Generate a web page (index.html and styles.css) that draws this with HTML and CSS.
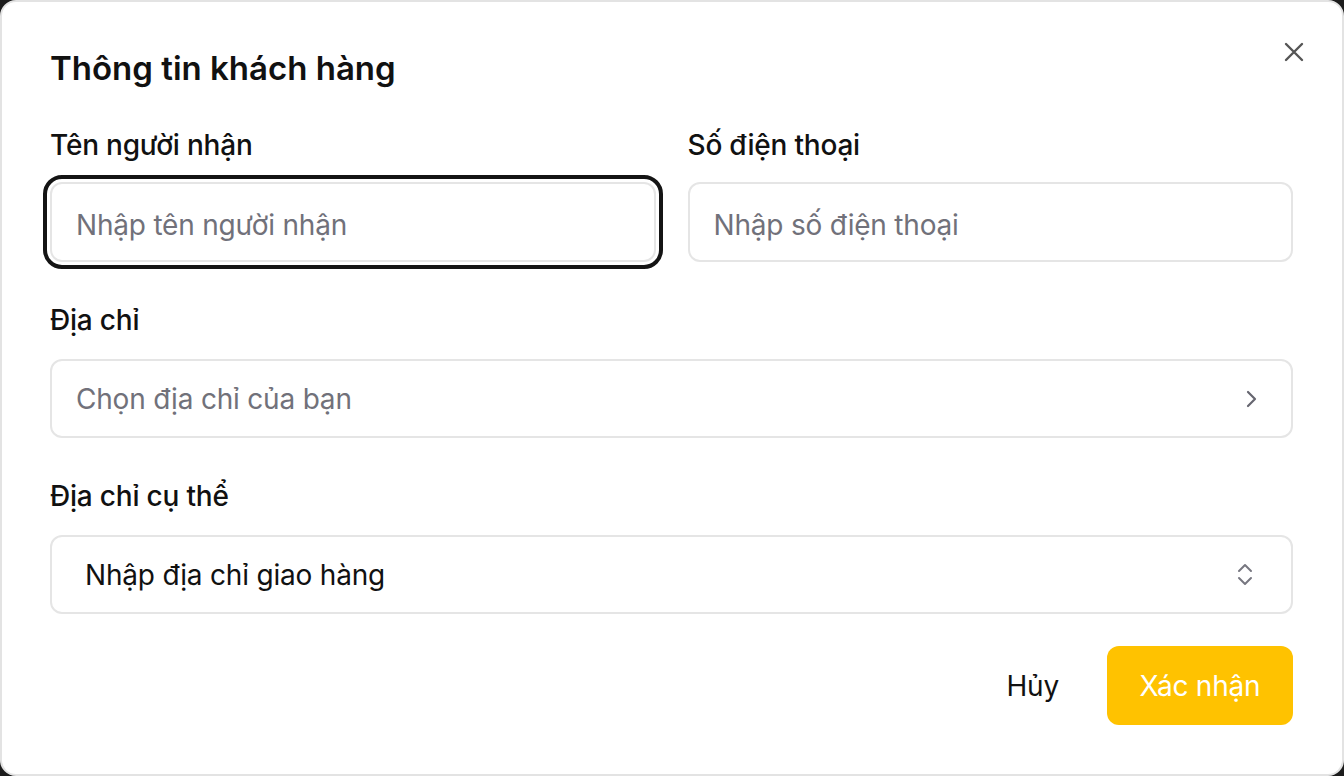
FILE: index.html
```html
<!DOCTYPE html>
<html lang="vi">
<head>
<meta charset="utf-8">
<title>Thông tin khách hàng</title>
<link rel="stylesheet" href="styles.css">
</head>
<body>
<div class="dialog">
  <button class="close" type="button" aria-label="Đóng">
    <svg width="20" height="20" viewBox="0 0 20 20" fill="none" stroke="#555" stroke-width="2.4" stroke-linecap="round"><path d="M2 2L18 18M18 2L2 18"/></svg>
  </button>
  <h1 class="title">Thông tin khách hàng</h1>
  <div class="row">
    <div class="field">
      <label class="label">Tên người nhận</label>
      <input class="input is-focused" type="text" placeholder="Nhập tên người nhận">
    </div>
    <div class="field">
      <label class="label">Số điện thoại</label>
      <input class="input" type="text" placeholder="Nhập số điện thoại">
    </div>
  </div>
  <div class="field field-wide">
    <label class="label">Địa chỉ</label>
    <div class="select">
      <span class="placeholder">Chọn địa chỉ của bạn</span>
      <svg class="chev-right" width="14" height="20" viewBox="0 0 14 20" fill="none" stroke="#666670" stroke-width="2.2" stroke-linecap="round" stroke-linejoin="round"><path d="M3 3L10 10L3 17"/></svg>
    </div>
  </div>
  <div class="field field-wide">
    <label class="label">Địa chỉ cụ thể</label>
    <div class="select select-combo">
      <span class="value">Nhập địa chỉ giao hàng</span>
      <svg class="chev-updown" width="20" height="28" viewBox="0 0 20 28" fill="none" stroke="#777780" stroke-width="2" stroke-linecap="round" stroke-linejoin="round"><path d="M4 10L10 4L16 10M4 17L10 23L16 17"/></svg>
    </div>
  </div>
  <div class="actions">
    <button class="btn btn-ghost" type="button">Hủy</button>
    <button class="btn btn-primary" type="button">Xác nhận</button>
  </div>
</div>
</body>
</html>
```
FILE: styles.css
```css
html, body {
  margin: 0;
  padding: 0;
}
body {
  background: #1c1c1c;
  font-family: Inter, "Noto Sans", "Liberation Sans", sans-serif;
  color: #111111;
}
.dialog {
  position: relative;
  box-sizing: border-box;
  width: 1344px;
  height: 776px;
  background: #ffffff;
  border: 2px solid #e3e3e3;
  border-radius: 16px;
  padding: 46px 49px 0 48px;
  display: flex;
  flex-direction: column;
}
.close {
  position: absolute;
  top: 38px;
  right: 36px;
  width: 24px;
  height: 24px;
  padding: 0;
  border: 0;
  background: none;
  display: flex;
  align-items: center;
  justify-content: center;
}
.title {
  margin: 0 0 41px;
  font-size: 33px;
  line-height: 40px;
  font-weight: 600;
  letter-spacing: 0;
}
.row {
  display: grid;
  grid-template-columns: 1fr 1fr;
  column-gap: 32px;
}
.field {
  display: flex;
  flex-direction: column;
  margin-bottom: 42px;
}
.label {
  font-size: 28px;
  line-height: 32px;
  font-weight: 500;
  letter-spacing: -0.2px;
  margin-bottom: 21px;
}
.field-wide .label {
  margin-bottom: 23px;
}
.input, .select {
  box-sizing: border-box;
  height: 80px;
  border: 2px solid #e5e5e5;
  border-radius: 12px;
  background: #fff;
  padding: 0 24px;
  font-family: inherit;
  font-size: 28px;
  letter-spacing: -0.2px;
  color: #111;
  width: 100%;
}
.input {
  padding-top: 5px;
}
.input::placeholder {
  color: #71717a;
}
.input.is-focused {
  outline: 4px solid #141414;
  outline-offset: 3px;
}
.select {
  display: flex;
  align-items: center;
  justify-content: space-between;
  padding: 0 32px 0 24px;
  height: 79px;
}
.placeholder {
  color: #71717a;
}
.select-combo {
  padding: 0 36px 0 33px;
}
.value {
  color: #111;
}
.actions {
  display: flex;
  justify-content: flex-end;
  align-items: center;
  gap: 48px;
  margin-top: -10px;
}
.btn {
  font-family: inherit;
  font-size: 28px;
  letter-spacing: -0.2px;
  border: 0;
  border-radius: 12px;
  height: 79px;
  cursor: pointer;
}
.btn-ghost {
  background: none;
  color: #111;
  padding: 0;
}
.btn-primary {
  background: #ffc200;
  color: #ffffff;
  width: 186px;
}
```
